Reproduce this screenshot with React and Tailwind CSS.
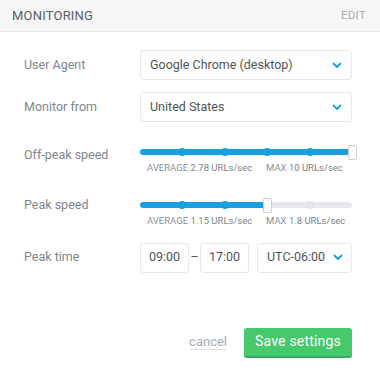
import React from 'react';

function Chevron() {
  return (
    <svg width="10" height="7" viewBox="0 0 10 7" className="shrink-0">
      <path d="M1.5 1.5 L5 5 L8.5 1.5" fill="none" stroke="#1a9fe0" strokeWidth="1.8" strokeLinecap="round" strokeLinejoin="round" />
    </svg>
  );
}

function Select({ value }) {
  return (
    <div className="flex items-center justify-between h-[30px] px-[9px] pr-[9px] border border-[#e6e8eb] rounded-[3px] bg-white text-[12.5px] text-[#50555c]">
      <span>{value}</span>
      <Chevron />
    </div>
  );
}

function Slider({ value, avg, max }) {
  const stops = [20, 40, 60, 80];
  return (
    <div>
      <div className="relative h-[14px]">
        <div className="absolute left-0 right-0 top-[4px] h-[6px] rounded-full bg-[#e6e8eb]" />
        <div className="absolute left-0 top-[4px] h-[6px] rounded-l-full bg-[#1a9fe0]" style={{ width: value + '%' }} />
        {stops.map((s) => (
          <div
            key={s}
            className={'absolute top-[3px] w-[8px] h-[8px] rounded-full -ml-[4px] ' + (s < value ? 'bg-[#1a9fe0]' : 'bg-[#e1e4e8]')}
            style={{ left: s + '%' }}
          />
        ))}
        <div
          className="absolute top-0 w-[9px] h-[15px] -ml-[4px] rounded-[2px] bg-white border border-[#c9cdd2]"
          style={{ left: value + '%' }}
        />
      </div>
      <div className="flex mt-[2px] text-[9.5px] text-[#8b9097]">
        <span className="w-[126px] pl-[7px]">AVERAGE <span className="text-[#7a7f86]">{avg} URLs/sec</span></span>
        <span>MAX <span className="text-[#7a7f86]">{max} URLs/sec</span></span>
      </div>
    </div>
  );
}

export default function App() {
  return (
    <div className="w-[380px] h-[385px] bg-white" style={{ fontFamily: 'Roboto, "Liberation Sans", sans-serif' }}>
      <div className="flex items-center justify-between h-[32px] px-[12px] pr-[14px] bg-[#f6f6f6] border-b border-[#e8e8e8]">
        <span className="text-[13px] text-[#5a5f66] tracking-[0.2px]">MONITORING</span>
        <span className="text-[11.5px] text-[#a4a9b0] tracking-[0.3px]">EDIT</span>
      </div>

      <div className="pl-[24px] pr-[28px] pt-[18px]">
        <div className="flex items-center h-[30px]">
          <div className="w-[116px] text-[12.5px] text-[#80858c]">User Agent</div>
          <div className="flex-1"><Select value="Google Chrome (desktop)" /></div>
        </div>
        <div className="flex items-center h-[30px] mt-[12px]">
          <div className="w-[116px] text-[12.5px] text-[#80858c]">Monitor from</div>
          <div className="flex-1"><Select value="United States" /></div>
        </div>

        <div className="flex items-start mt-[23px]">
          <div className="w-[116px] text-[12.5px] text-[#80858c] mt-[1px]">Off-peak speed</div>
          <div className="flex-1"><Slider value={100} avg="2.78" max="10" /></div>
        </div>
        <div className="flex items-start mt-[23px]">
          <div className="w-[116px] text-[12.5px] text-[#80858c] -mt-[2px]">Peak speed</div>
          <div className="flex-1"><Slider value={60} avg="1.15" max="1.8" /></div>
        </div>

        <div className="flex items-center mt-[14px]">
          <div className="w-[116px] text-[12.5px] text-[#80858c]">Peak time</div>
          <div className="flex-1 flex items-center">
            <div className="w-[49px] h-[30px] flex items-center justify-center border border-[#e6e8eb] rounded-[3px] text-[12.5px] text-[#50555c]">09:00</div>
            <span className="w-[11px] text-center text-[12.5px] text-[#50555c]">–</span>
            <div className="w-[49px] h-[30px] flex items-center justify-center border border-[#e6e8eb] rounded-[3px] text-[12.5px] text-[#50555c]">17:00</div>
            <div className="flex-1 ml-[8px] h-[30px] flex items-center justify-between pl-[9px] pr-[8px] border border-[#e6e8eb] rounded-[3px] text-[12.5px] text-[#50555c]">
              <span>UTC-06:00</span>
              <Chevron />
            </div>
          </div>
        </div>

        <div className="flex items-center justify-end mt-[55px] gap-[17px]">
          <span className="text-[13px] text-[#a4abb5] border-b border-[#dfe3e8] leading-[14px]">cancel</span>
          <button className="h-[30px] w-[108px] rounded-[3px] bg-[#45c96b] border-b-2 border-[#3aaa5a] text-[14px] text-white tracking-[0.2px]">
            Save settings
          </button>
        </div>
      </div>
    </div>
  );
}
